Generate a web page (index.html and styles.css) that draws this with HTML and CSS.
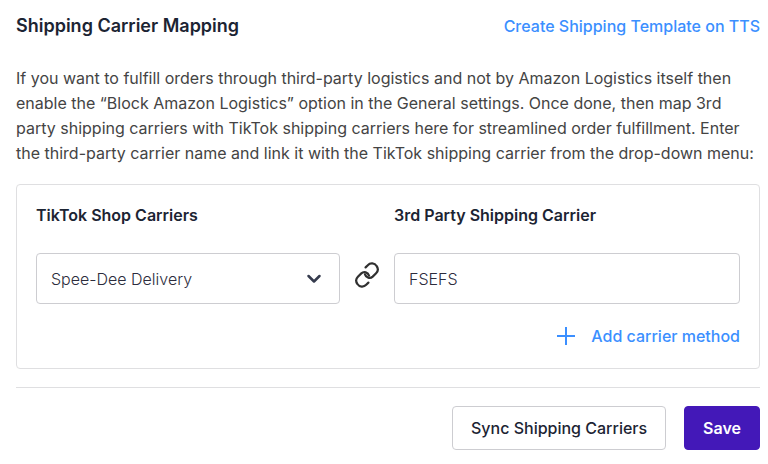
FILE: index.html
```html
<!DOCTYPE html>
<html lang="en">
<head>
    <meta charset="UTF-8">
    <meta name="viewport" content="width=device-width, initial-scale=1.0">
    <title>Shipping Carrier Mapping</title>
    <link rel="stylesheet" href="styles.css">
</head>
<body>
    <form class="mapping">
        <div class="header">
            <h1>Shipping Carrier Mapping</h1>
            <a href="#" class="link">Create Shipping Template on TTS</a>
        </div>
        <p class="intro">If you want to fulfill orders through third-party logistics and not by Amazon Logistics itself then enable the “Block Amazon Logistics” option in the General settings. Once done, then map 3rd party shipping carriers with TikTok shipping carriers here for streamlined order fulfillment. Enter the third-party carrier name and link it with the TikTok shipping carrier from the drop-down menu:</p>
        <div class="card">
            <div class="carriers">
                <label for="shopCarrier">TikTok Shop Carriers</label>
                <span></span>
                <label for="thirdParty">3rd Party Shipping Carrier</label>
                <div class="select">
                    <select id="shopCarrier">
                        <option>Spee-Dee Delivery</option>
                    </select>
                    <svg class="chevron" viewBox="0 0 16 16" aria-hidden="true">
                        <path d="M2.5 5l5.5 5.5L13.5 5"/>
                    </svg>
                </div>
                <svg class="chain" viewBox="0 0 26 26" aria-hidden="true">
                    <path d="M11.6 5.4l2.2-2.2a5.6 5.6 0 0 1 8.8.8 5.6 5.6 0 0 1-.5 7.2l-3.4 3.4a4.7 4.7 0 0 1-7.7-2.2"/>
                    <path d="M14.4 20.6l-2.2 2.2a5.6 5.6 0 0 1-8.8-.8 5.6 5.6 0 0 1 .5-7.2l3.4-3.4a4.7 4.7 0 0 1 7.7 2.2"/>
                </svg>
                <input id="thirdParty" type="text" value="FSEFS">
            </div>
            <button type="button" class="add">
                <svg class="plus" viewBox="0 0 18 18" aria-hidden="true">
                    <path d="M9 0v18M0 9h18"/>
                </svg>
                Add carrier method
            </button>
        </div>
        <div class="footer">
            <button type="button" class="btn">Sync Shipping Carriers</button>
            <button type="submit" class="btn primary">Save</button>
        </div>
    </form>
</body>
</html>
```
FILE: styles.css
```css
* {
    box-sizing: border-box;
}

body {
    margin: 0;
    background-color: #fff;
    color: #1c2433;
    font-family: Inter, "Liberation Sans", sans-serif;
    font-size: 16px;
}

button, input, select {
    font: inherit;
    color: inherit;
}

svg {
    fill: none;
    stroke: currentColor;
}

.mapping {
    padding: 14px 8px 14px 16px;
}

.header {
    display: flex;
    justify-content: space-between;
    align-items: center;
    margin-bottom: 28px;
}

h1 {
    margin: 0;
    font-size: 18px;
    line-height: 24px;
    font-weight: 600;
}

.link {
    color: #3b8fff;
    font-weight: 500;
    text-decoration: none;
}

.intro {
    margin: 0 0 18px;
    color: #444;
    line-height: 25px;
}

.card {
    padding: 20px 19px;
    border: 1px solid #dfdfe1;
    border-radius: 4px;
}

.carriers {
    display: grid;
    grid-template-columns: 304fr 26px 346fr;
    column-gap: 14px;
    row-gap: 28px;
    align-items: center;
}

label {
    line-height: 20px;
    font-weight: 600;
}

.select {
    display: grid;
    align-items: center;
}

select, input {
    width: 100%;
    height: 51px;
    padding: 0 14px;
    border: 1px solid #cdcdd1;
    border-radius: 4px;
    background-color: #fff;
    color: #2c2c3c;
    font-weight: 300;
}

select {
    grid-area: 1 / 1;
    appearance: none;
}

.chevron {
    grid-area: 1 / 1;
    justify-self: end;
    width: 16px;
    height: 16px;
    margin-right: 18px;
    color: #353b4d;
    stroke-width: 2.5;
    stroke-linecap: round;
    stroke-linejoin: round;
    pointer-events: none;
}

.chain {
    width: 26px;
    height: 26px;
    margin-bottom: 8px;
    color: #303030;
    stroke-width: 2.2;
    stroke-linecap: round;
}

.add {
    display: flex;
    align-items: center;
    gap: 16px;
    margin: 20px 0 0 auto;
    padding: 0;
    border: none;
    background: none;
    color: #3b8fff;
    line-height: 24px;
    font-weight: 500;
    cursor: pointer;
}

.plus {
    width: 18px;
    height: 18px;
    stroke-width: 2;
}

.footer {
    display: flex;
    justify-content: flex-end;
    gap: 18px;
    margin-top: 18px;
    padding-top: 18px;
    border-top: 1px solid #dfdfe1;
}

.btn {
    height: 44px;
    padding: 0 18px;
    border: 1px solid #cdcdd1;
    border-radius: 4px;
    background-color: #fff;
    font-weight: 500;
    cursor: pointer;
}

.primary {
    border-color: #4318b8;
    background-color: #4318b8;
    color: #fff;
    font-weight: 600;
}
```
